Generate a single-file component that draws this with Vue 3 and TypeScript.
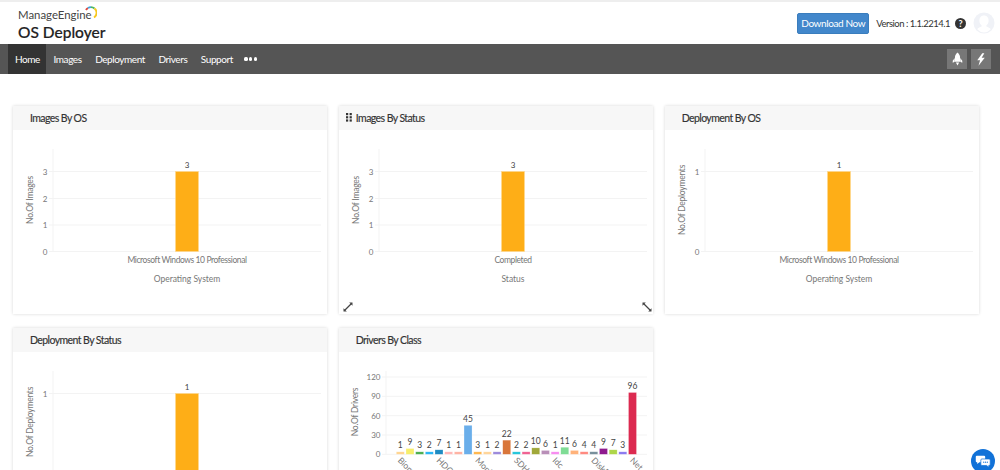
<script setup lang="ts">
interface SimpleChart {
  title: string
  kind: 'simple'
  yTitle: string
  ticks: { label: string; y: number }[]
  barLabel: string
  category: string
  axisTitle: string
  tools?: boolean
}
interface DriverChart {
  title: string
  kind: 'drivers'
}
type Chart = SimpleChart | DriverChart

const threeTicks = [
  { label: '3', y: 41.5 },
  { label: '2', y: 68.5 },
  { label: '1', y: 95 },
  { label: '0', y: 121.5 },
]
const oneTicks = [
  { label: '1', y: 41.5 },
  { label: '0', y: 121.5 },
]

const charts: Chart[] = [
  { title: 'Images By OS', kind: 'simple', yTitle: 'No.Of Images', ticks: threeTicks, barLabel: '3', category: 'Microsoft Windows 10 Professional', axisTitle: 'Operating System' },
  { title: 'Images By Status', kind: 'simple', yTitle: 'No.Of Images', ticks: threeTicks, barLabel: '3', category: 'Completed', axisTitle: 'Status', tools: true },
  { title: 'Deployment By OS', kind: 'simple', yTitle: 'No.Of Deployments', ticks: oneTicks, barLabel: '1', category: 'Microsoft Windows 10 Professional', axisTitle: 'Operating System' },
  { title: 'Deployment By Status', kind: 'simple', yTitle: 'No.Of Deployments', ticks: oneTicks, barLabel: '1', category: 'Completed', axisTitle: 'Status' },
  { title: 'Drivers By Class', kind: 'drivers' },
]

const navItems = ['Home', 'Images', 'Deployment', 'Drivers', 'Support']

const driverTicks = [120, 90, 60, 30, 0]
const zeroY = 102.3
const unit = 0.644
const tickY = (v: number) => zeroY - v * unit

const driverValues: [number, string][] = [
  [1, '#ffd591'], [9, '#f6ee6c'], [3, '#4caf50'], [2, '#29b6f6'], [7, '#1e8bc3'],
  [1, '#ffb8b8'], [1, '#ffb3a3'], [45, '#6aaeea'], [3, '#ffb74d'], [1, '#ffd59a'],
  [2, '#9c8adb'], [22, '#d9763a'], [2, '#26c6da'], [2, '#f06292'], [10, '#a0a83a'],
  [6, '#b98fb8'], [1, '#f78cf0'], [11, '#7fdc95'], [6, '#ffb27a'], [4, '#ff8a80'],
  [4, '#78909c'], [9, '#8e1a8e'], [7, '#aed64a'], [3, '#8c7af0'], [96, '#dc2a50'],
]
const drivers = driverValues.map(([value, color], i) => ({
  value,
  color,
  x: 61.3 + i * 9.675,
  y: zeroY - Math.max(value * unit, 2.5),
  h: Math.max(value * unit, 2.5),
}))
const driverLabels: [number, string][] = [
  [0, 'Biometric'], [4, 'HDC'], [8, 'Monitor'], [12, 'SDHost'], [16, 'Idc'], [20, 'DiskDrive'], [24, 'Net'],
]
const labelX = (i: number) => 61.3 + i * 9.675 - 3
</script>

<template>
  <div class="page">
    <header class="top">
      <div class="brand">
        <div class="me">
          <span>ManageEngine</span>
          <svg class="arc" width="12" height="14" viewBox="0 0 12 14" fill="none" stroke-width="1.900">
            <path d="M1 4 A5.500 5.500 0 0 1 3 2" stroke="#e0483e" />
            <path d="M3 2 A5.500 5.500 0 0 1 6 1.100" stroke="#3fa2dc" />
            <path d="M6 1.100 A5.500 5.500 0 0 1 9.500 2.500" stroke="#4fb85c" />
            <path d="M9.500 2.500 A5.500 5.500 0 0 1 9 11.500" stroke="#f7c81e" />
          </svg>
        </div>
        <div class="product">OS Deployer</div>
      </div>
      <div class="top-right">
        <button class="download">Download Now</button>
        <span class="version">Version : 1.1.2214.1</span>
        <span class="help">?</span>
        <svg class="avatar" width="22" height="22" viewBox="0 0 22 22">
          <circle cx="11" cy="11" r="10.500" fill="#f0f2f7" />
          <path d="M11 3.500c-3 0-4.600 2.200-4.600 5.200 0 2 .9 3.700 2.200 4.600v1.300c-2 .6-3.500 1.500-4.400 2.700A9.800 9.800 0 0 0 11 20.500a9.800 9.800 0 0 0 6.800-3.200c-.9-1.200-2.400-2.100-4.400-2.700v-1.300c1.300-.9 2.200-2.600 2.200-4.600 0-3-1.600-5.200-4.600-5.200z" fill="#fff" />
        </svg>
      </div>
    </header>

    <nav class="nav">
      <ul class="menu">
        <li v-for="(item, i) in navItems" :key="item" :class="{ active: i === 0 }">{{ item }}</li>
        <li class="dots"><i></i><i></i><i></i></li>
      </ul>
      <div class="nav-tools">
        <span class="tool">
          <svg width="11" height="14" viewBox="0 0 12 14" fill="#fff">
            <path d="M6 0C4 1.600 3.200 3.700 3.200 5.600V10h5.600V5.600C8.800 3.700 8 1.600 6 0z" />
            <path d="M3 6 .8 8.800v2.400L3 10zM9 6l2.200 2.800v2.400L9 10z" />
            <path d="M4.200 10.800h3.600L6 14z" />
          </svg>
        </span>
        <span class="tool">
          <svg width="10" height="13" viewBox="0 0 12 15" fill="#fff">
            <path d="M7.500 0 1.500 8.300h3.400L3 15l7.500-9.500H6.800L10 0z" />
          </svg>
        </span>
      </div>
    </nav>

    <main class="grid">
      <section v-for="chart in charts" :key="chart.title" class="card">
        <div class="card-head">
          <svg v-if="chart.kind === 'simple' && chart.tools" class="grip" width="6" height="9" viewBox="0 0 6 9" fill="#333">
            <template v-for="r in 3" :key="r">
              <rect x="0" :y="(r - 1) * 3.200" width="2.200" height="2.200" />
              <rect x="3.600" :y="(r - 1) * 3.200" width="2.200" height="2.200" />
            </template>
          </svg>
          <h3 :class="{ tight: chart.kind === 'simple' && chart.tools }">{{ chart.title }}</h3>
        </div>

        <svg v-if="chart.kind === 'simple'" class="plot" viewBox="0 0 315 184" width="315" height="184">
          <line x1="40" x2="40" y1="19" y2="121.500" class="axis" />
          <line v-for="t in chart.ticks" :key="t.label" x1="36" x2="308" :y1="t.y" :y2="t.y" class="gridline" />
          <text v-for="t in chart.ticks" :key="'l' + t.label" x="34.500" :y="t.y + 3" text-anchor="end" class="tick">{{ t.label }}</text>
          <text transform="translate(20 70) rotate(-90)" text-anchor="middle" class="title-y">{{ chart.yTitle }}</text>
          <rect x="162.500" y="41.500" width="23" height="80" fill="#feae17" stroke="#ffd98f" stroke-width="0.600" />
          <text x="174" y="38" text-anchor="middle" class="val">{{ chart.barLabel }}</text>
          <text x="174" y="132.500" text-anchor="middle" class="tick cat">{{ chart.category }}</text>
          <text x="174" y="151.500" text-anchor="middle" class="title-x">{{ chart.axisTitle }}</text>
        </svg>

        <svg v-else class="plot" viewBox="0 0 315 184" width="315" height="184">
          <line x1="47" x2="47" y1="19" y2="102.300" class="axis" />
          <line v-for="t in driverTicks" :key="t" x1="43" x2="308" :y1="tickY(t)" :y2="tickY(t)" class="gridline" />
          <text v-for="t in driverTicks" :key="'l' + t" x="41.500" :y="tickY(t) + 3" text-anchor="end" class="tick">{{ t }}</text>
          <text transform="translate(19 60) rotate(-90)" text-anchor="middle" class="title-y">No.Of Drivers</text>
          <g v-for="d in drivers" :key="d.x">
            <rect :x="d.x - 4" :y="d.y" width="8" :height="d.h" :fill="d.color" stroke="#fff" stroke-opacity="0.500" stroke-width="0.500" />
            <text :x="d.x" :y="d.y - 3.500" text-anchor="middle" class="val big">{{ d.value }}</text>
          </g>
          <text v-for="[i, name] in driverLabels" :key="name" :transform="`translate(${labelX(i)} 109) rotate(45)`" class="tick big">{{ name }}</text>
        </svg>

        <template v-if="chart.kind === 'simple' && chart.tools">
          <svg class="resize left" width="10" height="10" viewBox="0 0 10 10" fill="#444" stroke="#444">
            <line x1="1.500" y1="8.500" x2="8.500" y2="1.500" stroke-width="1.300" />
            <path d="M0.500 6.200v3.300h3.300zM9.500 3.800V.5H6.200z" stroke="none" />
          </svg>
          <svg class="resize right" width="10" height="10" viewBox="0 0 10 10" fill="#444" stroke="#444">
            <line x1="1.500" y1="1.500" x2="8.500" y2="8.500" stroke-width="1.300" />
            <path d="M.5 3.800V.5h3.300zM9.500 6.200v3.300H6.200z" stroke="none" />
          </svg>
        </template>
      </section>
    </main>

    <span class="chat">
      <svg width="22" height="18" viewBox="0 0 22 18">
        <path d="M2.500 1h10a1.500 1.500 0 0 1 1.500 1.500v6A1.500 1.500 0 0 1 12.500 10H6l-3 2.500V10h-.5A1.500 1.500 0 0 1 1 8.500v-6A1.500 1.500 0 0 1 2.500 1z" fill="#fff" />
        <path d="M9.500 5.500h10A1.500 1.500 0 0 1 21 7v6a1.500 1.500 0 0 1-1.500 1.500H19V17l-3-2.500H9.500A1.500 1.500 0 0 1 8 13V7a1.500 1.500 0 0 1 1.500-1.500z" fill="#fff" stroke="#1172d8" stroke-width="1" />
        <circle cx="12" cy="10" r=".9" fill="#1172d8" />
        <circle cx="14.500" cy="10" r=".9" fill="#1172d8" />
        <circle cx="17" cy="10" r=".9" fill="#1172d8" />
      </svg>
    </span>
  </div>
</template>

<style>
html, body {
  margin: 0;
  background: #fff;
}
</style>

<style scoped>
.page {
  position: relative;
  width: 1000px;
  height: 470px;
  overflow: hidden;
  background: #fff;
  font-family: Lato, "Open Sans", sans-serif;
  color: #333;
}
.top {
  box-sizing: border-box;
  height: 44px;
  border-top: 2px solid #eeeeee;
  display: flex;
  justify-content: space-between;
  padding: 0 5px 0 18px;
}
.brand {
  display: flex;
  flex-direction: column;
}
.me {
  position: relative;
  font-size: 11.400px;
  line-height: 14px;
  margin-top: 6px;
  color: #444;
}
.arc {
  position: absolute;
  left: 67px;
  top: -2px;
}
.product {
  font-size: 15.500px;
  line-height: 20px;
  font-weight: 500;
  color: #222;
  -webkit-text-stroke: 0.2px #222;
}
.top-right {
  display: flex;
  align-items: center;
}
.download {
  width: 72px;
  height: 21px;
  padding: 0;
  border: 1px solid #3a7dbd;
  border-radius: 2px;
  background: #4287cb;
  color: #fff;
  font: 10px Lato, sans-serif;
  letter-spacing: -0.4px;
  white-space: nowrap;
}
.version {
  margin-left: 7px;
  font-size: 9.500px;
  color: #333;
  letter-spacing: -0.5px;
  white-space: nowrap;
}
.help {
  width: 11px;
  height: 11px;
  margin-left: 5px;
  border-radius: 50%;
  background: #333;
  color: #fff;
  font-size: 9px;
  font-weight: 700;
  line-height: 11px;
  text-align: center;
}
.avatar {
  margin-left: 7px;
  flex: none;
}
.nav {
  height: 30px;
  background: #555;
  display: flex;
  justify-content: space-between;
  align-items: center;
  padding: 0 9px 0 8px;
}
.menu {
  display: flex;
  align-items: stretch;
  height: 100%;
  margin: 0;
  padding: 0;
  list-style: none;
}
.menu li {
  display: flex;
  align-items: center;
  padding: 0 6.500px 0 7px;
  color: #fff;
  font-size: 10px;
  letter-spacing: -0.42px;
}
.menu li.active {
  background: #333;
}
.menu .dots {
  gap: 1.600px;
  margin-left: -2px;
}
.dots i {
  width: 3.200px;
  height: 3.200px;
  border-radius: 50%;
  background: #fff;
}
.nav-tools {
  display: flex;
  gap: 4px;
}
.tool {
  width: 20px;
  height: 20px;
  background: #777;
  display: flex;
  align-items: center;
  justify-content: center;
}
.grid {
  display: grid;
  grid-template-columns: repeat(3, 1fr);
  gap: 14px 11.500px;
  padding: 32px 21px 0 13px;
}
.card {
  position: relative;
  height: 208px;
  background: #fff;
  box-shadow: 0 0 3px rgba(0, 0, 0, 0.16);
  overflow: hidden;
}
.card-head {
  box-sizing: border-box;
  height: 24px;
  background: #f7f7f7;
  display: flex;
  align-items: center;
  padding: 0 0 1px 7px;
}
.card-head h3 {
  margin: 0 0 0 10px;
  font-size: 10.500px;
  font-weight: 400;
  letter-spacing: -0.58px;
  color: #333;
  -webkit-text-stroke: 0.15px #333;
}
.card-head h3.tight {
  margin-left: 4px;
}
.grip {
  flex: none;
}
.plot {
  display: block;
}
.axis, .gridline {
  stroke: #f3f3f3;
  stroke-width: 1;
}
.tick, .title-x, .title-y, .val {
  font-family: Lato, sans-serif;
}
.tick {
  font-size: 8px;
  fill: #777;
}
.tick.cat {
  font-size: 8.500px;
  letter-spacing: -0.42px;
}
.tick.big {
  font-size: 8.500px;
}
.val {
  font-size: 8px;
  fill: #444;
}
.val.big {
  font-size: 8.500px;
}
.title-x {
  font-size: 8.500px;
  fill: #777;
}
.title-y {
  font-size: 8.500px;
  letter-spacing: -0.25px;
  fill: #777;
}
.resize {
  position: absolute;
  bottom: 2px;
}
.resize.left {
  left: 4px;
}
.resize.right {
  right: 1px;
}
.chat {
  position: absolute;
  left: 971px;
  top: 449px;
  width: 24px;
  height: 24px;
  border-radius: 50%;
  background: #1172d8;
  display: flex;
  align-items: center;
  justify-content: center;
}
.chat svg {
  width: 16px;
  height: 13px;
}
</style>
